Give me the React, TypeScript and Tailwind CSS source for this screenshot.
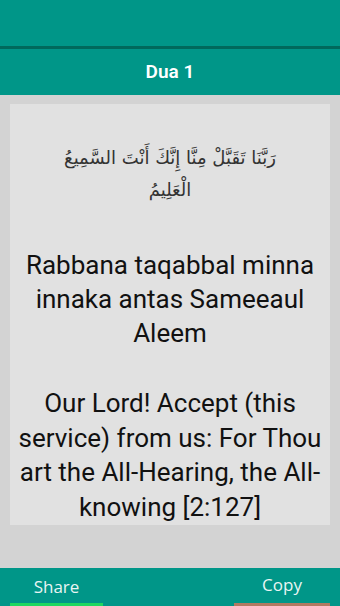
export default function App() {
  return (
    <div className="w-[340px] h-[606px] flex flex-col bg-[#d3d3d3] overflow-hidden" style={{ fontFamily: "Roboto, sans-serif" }}>
      <div className="h-[46px] bg-[#009688] shrink-0" />
      <div className="h-[3px] bg-[#00695c] shrink-0" />
      <div className="h-[46px] bg-[#009688] shrink-0 flex items-center justify-center text-white text-[19px] font-semibold">
        Dua 1
      </div>
      <div className="flex-1 px-[10px] pt-[9px] pb-[43px] flex flex-col">
        <div className="flex-1 bg-[#e1e1e1] flex flex-col items-center text-center">
          <p
            dir="rtl"
            className="mt-[38px] px-[50px] text-[18px] leading-[32px] text-[#333]"
            style={{ fontFamily: "'DejaVu Sans', 'Noto Sans', sans-serif" }}
          >
            رَبَّنَا تَقَبَّلْ مِنَّا إِنَّكَ أَنْتَ السَّمِيعُ الْعَلِيمُ
          </p>
          <p className="mt-[42px] px-[14px] text-[26px] leading-[34px] text-[#111]">
            Rabbana taqabbal minna innaka antas Sameeaul Aleem
          </p>
          <p className="mt-[36px] px-[2px] text-[26px] leading-[34.5px] text-[#111]">
            Our Lord! Accept (this service) from us: For Thou art the All-Hearing, the All-knowing [2:127]
          </p>
        </div>
      </div>
      <div className="h-[38px] bg-[#009688] shrink-0 flex justify-between px-[10px]" style={{ fontFamily: "'Open Sans', sans-serif" }}>
        <div className="w-[93px] flex flex-col">
          <div className="flex-1 flex items-center justify-center text-[#e8f5f3] text-[17px] pt-[3px]">Share</div>
          <div className="h-[3px] bg-[#1ed760]" />
        </div>
        <div className="w-[96px] flex flex-col">
          <div className="flex-1 flex items-center justify-center text-[#e8f5f3] text-[17px] pb-[2px]">Copy</div>
          <div className="h-[3px] bg-[#b07a62]" />
        </div>
      </div>
    </div>
  );
}
